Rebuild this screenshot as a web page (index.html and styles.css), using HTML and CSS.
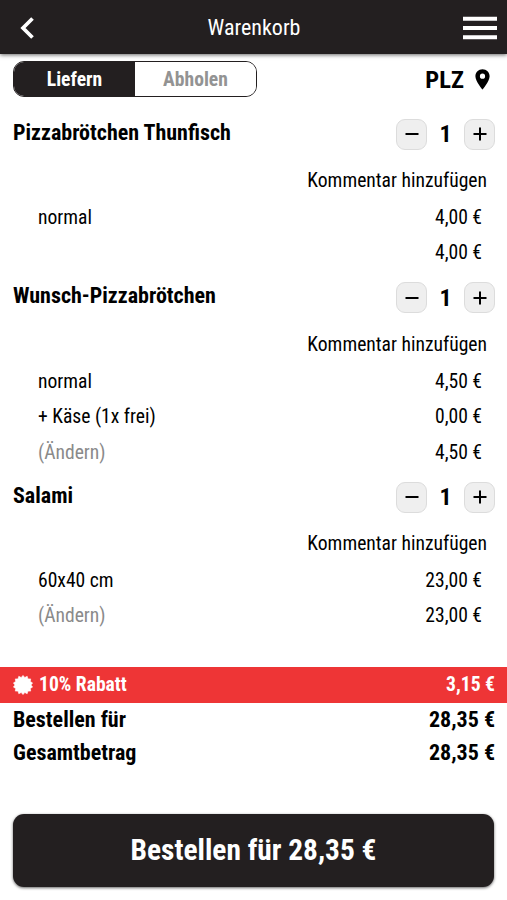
FILE: index.html
```
<!DOCTYPE html>
<html lang="de">
<head>
    <meta charset="UTF-8">
    <meta name="viewport" content="width=device-width, initial-scale=1.0">
    <title>Warenkorb</title>
    <link rel="stylesheet" href="styles.css">
</head>
<body>
    <header class="topbar">
        <svg class="back" width="14" height="22" viewBox="0 0 14 22"><path d="M12.5 1.5 L3 11 L12.5 20.5" fill="none" stroke="#fff" stroke-width="3.7"/></svg>
        <h1>Warenkorb</h1>
        <svg class="menu" width="34" height="24" viewBox="0 0 34 24"><path d="M0 2.7h34M0 12h34M0 21.3h34" stroke="#fff" stroke-width="4"/></svg>
    </header>

    <main>
        <div class="delivery">
            <div class="toggle">
                <button class="active">Liefern</button>
                <button>Abholen</button>
            </div>
            <div class="plz">
                <span>PLZ</span>
                <svg width="15" height="21" viewBox="0 0 15 21"><path fill="#000" fill-rule="evenodd" d="M7.5 0.3C3.5 0.3 0.4 3.4 0.4 7.3C0.4 12.5 7.5 20.6 7.5 20.6S14.6 12.5 14.6 7.3C14.6 3.4 11.5 0.3 7.5 0.3ZM7.5 9.8A2.6 2.6 0 1 1 7.5 4.6A2.6 2.6 0 0 1 7.5 9.8Z"/></svg>
            </div>
        </div>

        <section class="item">
            <div class="item-head">
                <h2>Pizzabrötchen Thunfisch</h2>
                <div class="stepper">
                    <button><svg width="14" height="14" viewBox="0 0 14 14"><path d="M0.5 7h13" stroke="#000" stroke-width="2"/></svg></button>
                    <span>1</span>
                    <button><svg width="14" height="14" viewBox="0 0 14 14"><path d="M0.5 7h13M7 0.5v13" stroke="#000" stroke-width="2"/></svg></button>
                </div>
            </div>
            <div class="comment">Kommentar hinzufügen</div>
            <div class="row"><span>normal</span><span>4,00 €</span></div>
            <div class="row"><span></span><span>4,00 €</span></div>
        </section>

        <section class="item">
            <div class="item-head">
                <h2>Wunsch-Pizzabrötchen</h2>
                <div class="stepper">
                    <button><svg width="14" height="14" viewBox="0 0 14 14"><path d="M0.5 7h13" stroke="#000" stroke-width="2"/></svg></button>
                    <span>1</span>
                    <button><svg width="14" height="14" viewBox="0 0 14 14"><path d="M0.5 7h13M7 0.5v13" stroke="#000" stroke-width="2"/></svg></button>
                </div>
            </div>
            <div class="comment">Kommentar hinzufügen</div>
            <div class="row"><span>normal</span><span>4,50 €</span></div>
            <div class="row"><span>+ Käse (1x frei)</span><span>0,00 €</span></div>
            <div class="row"><span class="change">(Ändern)</span><span>4,50 €</span></div>
        </section>

        <section class="item">
            <div class="item-head">
                <h2>Salami</h2>
                <div class="stepper">
                    <button><svg width="14" height="14" viewBox="0 0 14 14"><path d="M0.5 7h13" stroke="#000" stroke-width="2"/></svg></button>
                    <span>1</span>
                    <button><svg width="14" height="14" viewBox="0 0 14 14"><path d="M0.5 7h13M7 0.5v13" stroke="#000" stroke-width="2"/></svg></button>
                </div>
            </div>
            <div class="comment">Kommentar hinzufügen</div>
            <div class="row"><span>60x40 cm</span><span>23,00 €</span></div>
            <div class="row"><span class="change">(Ändern)</span><span>23,00 €</span></div>
        </section>
    </main>

    <div class="discount">
        <svg width="20" height="20" viewBox="0 0 20 20"><path fill="#fff" stroke="#fff" stroke-width="0.6" stroke-linejoin="round" d="M10 .4 11.8 2.5 14.2 1.3 15 3.9 17.7 3.9 17.3 6.6 19.6 7.9 18 10 19.6 12.1 17.3 13.4 17.7 16.1 15 16.1 14.2 18.7 11.8 17.5 10 19.6 8.2 17.5 5.8 18.7 5 16.1 2.3 16.1 2.7 13.4 .4 12.1 2 10 .4 7.9 2.7 6.6 2.3 3.9 5 3.9 5.8 1.3 8.2 2.5Z"/></svg>
        <span>10% Rabatt</span>
        <span class="amount">3,15 €</span>
    </div>
    <div class="totals">
        <div class="total"><span>Bestellen für</span><span>28,35 €</span></div>
        <div class="total"><span>Gesamtbetrag</span><span>28,35 €</span></div>
    </div>

    <button class="order">Bestellen für 28,35 €</button>
</body>
</html>
```
FILE: styles.css
```
* {
    box-sizing: border-box;
}

body {
    margin: 0;
    height: 900px;
    overflow: hidden;
    background-color: #fff;
    color: #000;
    font-family: "Roboto Condensed", Roboto, sans-serif;
    font-stretch: 75%;
    font-size: 19.6px;
}

button {
    font: inherit;
    border: none;
    padding: 0;
    cursor: pointer;
}

svg {
    display: block;
}

.topbar {
    height: 54px;
    padding: 2px 10px 0 20px;
    display: grid;
    grid-template-columns: 34px 1fr 43px;
    align-items: center;
    background-color: #231f20;
    box-shadow: 0 1px 4px rgba(0, 0, 0, 0.6);
}

h1 {
    margin: 0 0 1px;
    font-size: 22px;
    font-weight: 400;
    text-align: center;
    color: #fff;
}

.menu {
    justify-self: end;
}

.delivery {
    display: flex;
    justify-content: space-between;
    align-items: center;
    margin-top: 7px;
    height: 36px;
    padding: 0 17px 0 13px;
}

.toggle {
    display: flex;
    width: 244px;
    height: 36px;
    border: 1px solid #231f20;
    border-radius: 11px;
    overflow: hidden;
}

.toggle button {
    flex: 1;
    font-weight: 700;
    color: #939393;
    background-color: #fff;
}

.toggle .active {
    color: #fff;
    background-color: #231f20;
}

.plz {
    display: flex;
    align-items: center;
    gap: 11px;
    font-size: 24.5px;
    font-weight: 700;
}

.item:first-of-type {
    margin-top: 9px;
}

.item-head {
    display: flex;
    justify-content: space-between;
    align-items: center;
    height: 56px;
    padding: 0 12px 0 13px;
}

h2 {
    margin: 0 0 4px;
    font-size: 22px;
    font-weight: 700;
}

.stepper {
    display: grid;
    grid-template-columns: 31px 37px 31px;
    align-items: center;
    text-align: center;
    font-size: 24px;
    font-weight: 700;
}

.stepper button {
    display: flex;
    align-items: center;
    justify-content: center;
    height: 31px;
    border: 1px solid #dcdcdc;
    border-radius: 9px;
    background-color: #efefef;
}

.comment {
    line-height: 38px;
    padding-right: 20px;
    text-align: right;
}

.row {
    display: flex;
    justify-content: space-between;
    line-height: 35.4px;
    padding: 0 25px 0 38px;
}

/* keeps the next heading close to the last price */
.row:last-child {
    margin-bottom: -1px;
}

.change {
    color: #8a8a8a;
}

.discount {
    display: flex;
    align-items: center;
    gap: 6px;
    height: 36px;
    margin-top: 34px;
    padding: 0 12px 0 13px;
    background-color: #ee3536;
    color: #fff;
    font-weight: 700;
}

.amount {
    margin-left: auto;
}

.total {
    display: flex;
    justify-content: space-between;
    padding: 0 12px 0 13px;
    line-height: 33px;
    font-size: 22px;
    font-weight: 700;
}

.order {
    display: block;
    width: 481px;
    height: 73px;
    margin: 45px 13px 0;
    border-radius: 11px;
    background-color: #231f20;
    box-shadow: 0 1px 3px rgba(0, 0, 0, 0.6);
    color: #fff;
    font-size: 29.4px;
    font-weight: 700;
}
```
